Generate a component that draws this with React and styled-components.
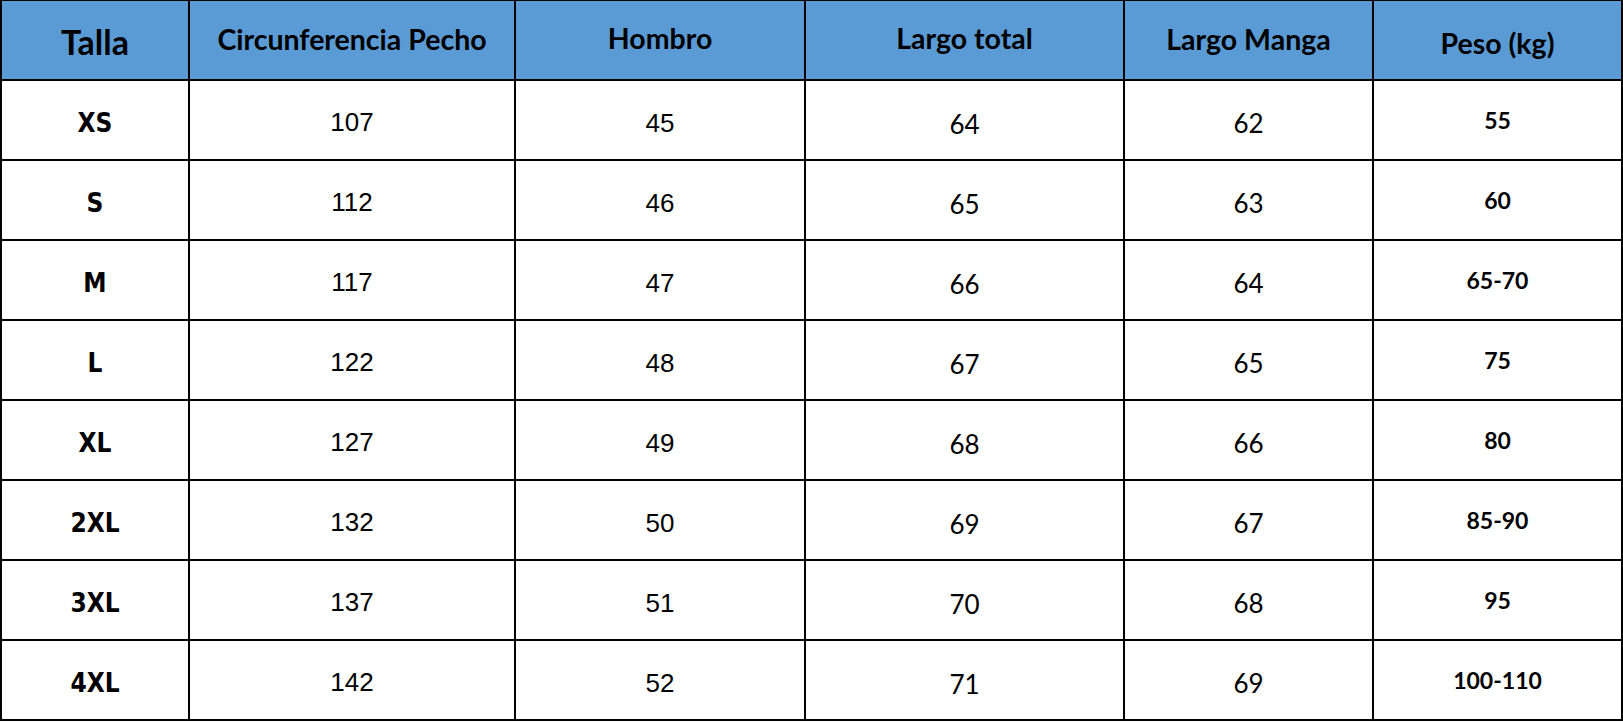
import styled, { createGlobalStyle } from 'styled-components';

const GlobalStyle = createGlobalStyle`
  html, body {
    margin: 0;
    padding: 0;
    background: #ffffff;
  }
`;

const fonts = {
  head: `font-family: "Lato", "Liberation Sans", sans-serif; font-weight: 700;`,
  size: `font-family: "Liberation Sans Narrow", "DejaVu Sans Condensed", "Liberation Sans", sans-serif; font-weight: 700; font-size: 26px;`,
  arial: `font-family: "Liberation Sans", Arial, sans-serif; font-weight: 400; font-size: 26px;`,
  calibri: `font-family: "Lato", "Liberation Sans", sans-serif; font-weight: 400; font-size: 26px;`,
  calibriBold: `font-family: "Lato", "Liberation Sans", sans-serif; font-weight: 700; font-size: 23px;`,
};

const Grid = styled.div`
  display: grid;
  grid-template-columns: 186px 324px 288px 317px 247px 247px;
  grid-auto-rows: 78px;
  gap: 2px;
  padding: 1px 2px 2px 2px;
  width: 1623px;
  box-sizing: border-box;
  background: #000000;
`;

const Cell = styled.div`
  display: flex;
  align-items: center;
  justify-content: center;
  box-sizing: border-box;
  background: ${(p) => (p.$head ? '#5b9bd5' : '#ffffff')};
  color: #000000;
  padding-top: ${(p) => (p.$shift > 0 ? p.$shift * 2 : 0)}px;
  padding-bottom: ${(p) => (p.$shift < 0 ? -p.$shift * 2 : 0)}px;
  ${(p) => fonts[p.$font]}
  font-size: ${(p) => (p.$size ? `${p.$size}px` : undefined)};
  white-space: nowrap;
`;

const headers = [
  { label: 'Talla', size: 34, shift: 1.5 },
  { label: 'Circunferencia Pecho', size: 28.5, shift: -1.5 },
  { label: 'Hombro', size: 28.5, shift: -2 },
  { label: 'Largo total', size: 28.5, shift: -2 },
  { label: 'Largo Manga', size: 28.5, shift: -1.5 },
  { label: 'Peso (kg)', size: 28.5, shift: 2.5 },
];

const columns = [
  { font: 'size', shift: 2.5 },
  { font: 'arial', shift: 2.5 },
  { font: 'arial', shift: 3 },
  { font: 'calibri', shift: 4 },
  { font: 'calibri', shift: 2.5 },
  { font: 'calibriBold', shift: -0.5 },
];

const rows = [
  ['XS', '107', '45', '64', '62', '55'],
  ['S', '112', '46', '65', '63', '60'],
  ['M', '117', '47', '66', '64', '65-70'],
  ['L', '122', '48', '67', '65', '75'],
  ['XL', '127', '49', '68', '66', '80'],
  ['2XL', '132', '50', '69', '67', '85-90'],
  ['3XL', '137', '51', '70', '68', '95'],
  ['4XL', '142', '52', '71', '69', '100-110'],
];

export default function App() {
  return (
    <>
      <GlobalStyle />
      <Grid>
        {headers.map((h) => (
          <Cell key={h.label} $head $font="head" $size={h.size} $shift={h.shift}>
            {h.label}
          </Cell>
        ))}
        {rows.map((row) =>
          row.map((value, i) => (
            <Cell key={`${row[0]}-${i}`} $font={columns[i].font} $shift={columns[i].shift}>
              {value}
            </Cell>
          ))
        )}
      </Grid>
    </>
  );
}
